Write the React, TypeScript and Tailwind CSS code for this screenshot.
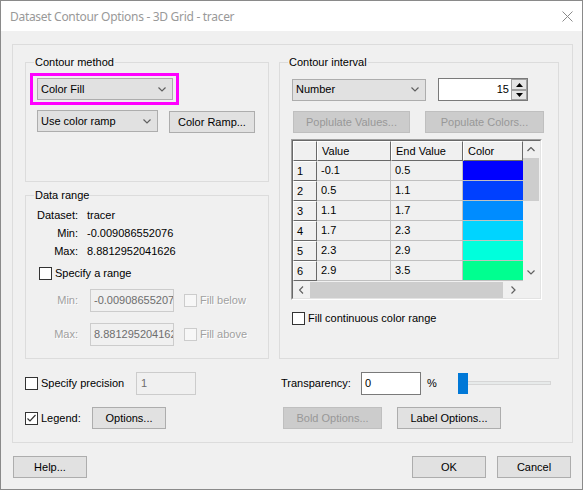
import React from "react";
import clsx from "clsx";

const colors = ["#0000ff", "#0040ff", "#008cff", "#00d4ff", "#00ffdc", "#00ff90"];

const rows = [
    ["-0.1", "0.5"],
    ["0.5", "1.1"],
    ["1.1", "1.7"],
    ["1.7", "2.3"],
    ["2.3", "2.9"],
    ["2.9", "3.5"],
];

function Chevron({dir = "down"}: {dir?: "down" | "up" | "left" | "right"}) {
    const pts = {
        down: "0.5,0.5 4,4 7.5,0.5",
        up: "0.5,4 4,0.5 7.5,4",
        left: "4,0.5 0.5,4 4,7.5",
        right: "0.5,0.5 4,4 0.5,7.5",
    }[dir];
    const vertical = dir === "down" || dir === "up";
    return (
        <svg width={vertical ? 8 : 5} height={vertical ? 5 : 8} viewBox={vertical ? "0 0 8 5" : "0 0 5 8"} className="shrink-0">
            <polyline points={pts} fill="none" stroke="#606060" strokeWidth={1.2}/>
        </svg>
    );
}

function Combo({label, w}: {label: string; w: string}) {
    return (
        <div className={clsx(w, "h-[22px] flex items-center justify-between pl-[3px] pr-[6px] bg-[#e1e1e1] border border-[#adadad]")}>
            <span>{label}</span>
            <Chevron/>
        </div>
    );
}

function Btn({label, w, disabled}: {label: string; w: string; disabled?: boolean}) {
    return (
        <button
            className={clsx(
                w,
                "h-[22px] flex items-center justify-center border",
                disabled ? "bg-[#cccccc] border-[#bfbfbf] text-[#989898]" : "bg-[#e1e1e1] border-[#adadad]"
            )}
        >
            {label}
        </button>
    );
}

function Check({checked, disabled}: {checked?: boolean; disabled?: boolean}) {
    return (
        <span
            className={clsx(
                "w-[13px] h-[13px] shrink-0 border flex items-center justify-center",
                disabled ? "border-[#cccccc] bg-[#f7f7f7]" : "border-[#333333] bg-white"
            )}
        >
            {checked && (
                <svg width="11" height="11" viewBox="0 0 11 11">
                    <polyline points="1.5,5.5 4,8 9.5,2" fill="none" stroke="#333333" strokeWidth="1.2"/>
                </svg>
            )}
        </span>
    );
}

function Group({label, className, children}: {label: string; className: string; children?: React.ReactNode}) {
    return (
        <div className={clsx("relative border border-[#dcdcdc]", className)}>
            <span className="absolute -top-[7px] left-[8px] px-[1px] bg-[#f0f0f0]">{label}</span>
            {children}
        </div>
    );
}

const headCell = "h-[20px] flex items-center bg-[#f0f0f0] border-t border-l border-t-white border-l-white border-r border-b border-r-[#696969] border-b-[#696969]";

function Table() {
    return (
        <div className="mt-[6px] ml-[11px] w-[251px] border border-t-[#a0a0a0] border-l-[#a0a0a0] border-b-white border-r-white">
            <div className="border border-t-[#696969] border-l-[#696969] border-b-[#e3e3e3] border-r-[#e3e3e3] bg-[#f0f0f0]">
                <div className="flex">
                    <div className="grid grid-cols-[24px_74px_72px_60px]">
                        <div className={headCell}></div>
                        <div className={clsx(headCell, "pl-[4px]")}>Value</div>
                        <div className={clsx(headCell, "pl-[4px]")}>End Value</div>
                        <div className={clsx(headCell, "pl-[4px]")}>Color</div>
                        {rows.map((r, i) => (
                            <React.Fragment key={i}>
                                <div className={clsx(headCell, "pl-[3px]")}>{i + 1}</div>
                                <div className="h-[20px] flex items-center pl-[4px] border-r border-b border-[#c0c0c0]">{r[0]}</div>
                                <div className="h-[20px] flex items-center pl-[4px] border-r border-b border-[#c0c0c0]">{r[1]}</div>
                                <div className="h-[20px] border-b border-[#c0c0c0]" style={{backgroundColor: colors[i]}}></div>
                            </React.Fragment>
                        ))}
                    </div>
                    <div className="w-[16px] h-[140px] flex flex-col items-center">
                        <div className="h-[17px] flex items-center justify-center"><Chevron dir="up"/></div>
                        <div className="w-[16px] h-[43px] bg-[#cdcdcd]"></div>
                        <div className="flex-1"></div>
                        <div className="h-[17px] flex items-center justify-center"><Chevron dir="down"/></div>
                    </div>
                </div>
                <div className="flex h-[17px]">
                    <div className="w-[230px] flex items-center">
                        <div className="w-[17px] flex justify-center"><Chevron dir="left"/></div>
                        <div className="w-[193px] h-[16px] bg-[#cdcdcd]"></div>
                        <div className="flex-1 flex justify-center"><Chevron dir="right"/></div>
                    </div>
                    <div className="flex-1"></div>
                </div>
            </div>
        </div>
    );
}

const off = "text-[#a0a0a0] [text-shadow:1px_1px_0_#ffffff]";

export default function App() {
    return (
        <div className="w-[583px] h-[490px] bg-[#f0f0f0] border border-[#8a8a8a] flex flex-col text-[11px] leading-[13px] text-black font-['Liberation_Sans',Arial,sans-serif]">
            <div className="h-[30px] shrink-0 bg-white flex items-center justify-between pl-[9px] pr-[9px]">
                <span className="text-[12px] text-[#999999] font-['Noto_Sans','Open_Sans',sans-serif] tracking-[-0.3px]">
                    Dataset Contour Options - 3D Grid - tracer
                </span>
                <svg width="11" height="11" viewBox="0 0 11 11">
                    <path d="M0.5 0.5 L10.5 10.5 M10.5 0.5 L0.5 10.5" stroke="#8a8a8a" strokeWidth="1"/>
                </svg>
            </div>

            <div className="mt-[13px] ml-[11px] w-[561px] h-[399px] shrink-0 border border-[#dcdcdc] pt-[17px] pl-[12px]">
                <div className="flex gap-[10px]">
                    <div className="w-[244px] flex flex-col gap-[13px]">
                        <Group label="Contour method" className="h-[120px]">
                            <div className="ml-[4px] mt-[10px] w-[149px] h-[32px] border-[3px] border-[#ff00ff] pl-[4px] pt-[2px]">
                                <Combo label="Color Fill" w="w-[136px]"/>
                            </div>
                            <div className="flex items-start mt-[5px] ml-[11px]">
                                <Combo label="Use color ramp" w="w-[121px]"/>
                                <div className="ml-[11px] mt-[1px]">
                                    <Btn label="Color Ramp..." w="w-[86px]"/>
                                </div>
                            </div>
                        </Group>

                        <Group label="Data range" className="h-[164px]">
                            <div className="mt-[10px] ml-[11px] flex flex-col">
                                <div className="flex h-[18px] items-center">
                                    <span className="w-[41px] text-right">Dataset:</span>
                                    <span className="ml-[9px]">tracer</span>
                                </div>
                                <div className="flex h-[18px] items-center">
                                    <span className="w-[41px] text-right">Min:</span>
                                    <span className="ml-[9px]">-0.009086552076</span>
                                </div>
                                <div className="flex h-[18px] items-center">
                                    <span className="w-[41px] text-right">Max:</span>
                                    <span className="ml-[9px]">8.8812952041626</span>
                                </div>
                                <div className="flex h-[18px] items-center mt-[4px] ml-[2px]">
                                    <Check/>
                                    <span className="ml-[3px]">Specify a range</span>
                                </div>
                                <div className="flex h-[23px] items-center mt-[7px]">
                                    <span className={clsx("w-[41px] text-right", off)}>Min:</span>
                                    <div className="ml-[12px] w-[84px] h-[23px] flex items-center pl-[3px] overflow-hidden whitespace-nowrap bg-[#f0f0f0] border border-[#cccccc] text-[#6d6d6d]">
                                        -0.009086552076
                                    </div>
                                    <span className="ml-[10px]"><Check disabled/></span>
                                    <span className={clsx("ml-[3px]", off)}>Fill below</span>
                                </div>
                                <div className="flex h-[23px] items-center mt-[11px]">
                                    <span className={clsx("w-[41px] text-right", off)}>Max:</span>
                                    <div className="ml-[12px] w-[84px] h-[23px] flex items-center pl-[3px] overflow-hidden whitespace-nowrap bg-[#f0f0f0] border border-[#cccccc] text-[#6d6d6d]">
                                        8.8812952041626
                                    </div>
                                    <span className="ml-[10px]"><Check disabled/></span>
                                    <span className={clsx("ml-[3px]", off)}>Fill above</span>
                                </div>
                            </div>
                        </Group>
                    </div>

                    <Group label="Contour interval" className="w-[280px] h-[297px]">
                        <div className="flex items-center mt-[15px] ml-[12px]">
                            <Combo label="Number" w="w-[134px]"/>
                            <div className="ml-[12px] w-[90px] h-[23px] flex bg-white border border-[#7a7a7a]">
                                <span className="flex-1 flex items-center justify-end pr-[2px]">15</span>
                                <div className="w-[16px] flex flex-col">
                                    <div className="h-[11px] flex items-center justify-center bg-[#e5e5e5] border border-[#a0a0a0]">
                                        <svg width="7" height="4" viewBox="0 0 7 4"><polygon points="0,4 3.5,0 7,4" fill="#000"/></svg>
                                    </div>
                                    <div className="h-[10px] flex items-center justify-center bg-[#e5e5e5] border border-[#a0a0a0]">
                                        <svg width="7" height="4" viewBox="0 0 7 4"><polygon points="0,0 3.5,4 7,0" fill="#000"/></svg>
                                    </div>
                                </div>
                            </div>
                        </div>
                        <div className="flex mt-[10px] ml-[13px] gap-[15px]">
                            <Btn label="Poplulate Values..." w="w-[117px]" disabled/>
                            <Btn label="Populate Colors..." w="w-[119px]" disabled/>
                        </div>
                        <Table/>
                        <div className="flex items-center mt-[11px] ml-[12px] h-[14px]">
                            <Check/>
                            <span className="ml-[3px]">Fill continuous color range</span>
                        </div>
                    </Group>
                </div>

                <div className="flex items-center mt-[12px] h-[24px]">
                    <div className="w-[244px] flex items-center">
                        <Check/>
                        <span className="ml-[3px] w-[95px]">Specify precision</span>
                        <div className="w-[60px] h-[23px] flex items-center pl-[4px] bg-[#f0f0f0] border border-[#cccccc] text-[#6d6d6d]">1</div>
                    </div>
                    <div className="ml-[10px] pl-[2px] flex items-center">
                        <span className="w-[80px]">Transparency:</span>
                        <div className="w-[60px] h-[23px] flex items-center pl-[3px] bg-white border border-[#7a7a7a]">0</div>
                        <span className="ml-[6px] w-[25px]">%</span>
                        <div className="relative ml-[6px] w-[93px] h-[21px] flex items-center">
                            <div className="w-full h-[4px] bg-[#e7eaea] border border-[#d6d6d6]"></div>
                            <div className="absolute left-0 top-0 w-[10px] h-[21px] bg-[#0078d7]"></div>
                        </div>
                    </div>
                </div>

                <div className="flex items-center mt-[12px] h-[22px]">
                    <div className="w-[244px] flex items-center">
                        <Check checked/>
                        <span className="ml-[3px] w-[51px]">Legend:</span>
                        <Btn label="Options..." w="w-[74px]"/>
                    </div>
                    <div className="ml-[10px] pl-[4px] flex items-center gap-[15px]">
                        <Btn label="Bold Options..." w="w-[99px]" disabled/>
                        <Btn label="Label Options..." w="w-[104px]"/>
                    </div>
                </div>
            </div>

            <div className="flex justify-between mt-[13px] pl-[12px] pr-[11px]">
                <Btn label="Help..." w="w-[74px]"/>
                <div className="flex gap-[11px]">
                    <Btn label="OK" w="w-[74px]"/>
                    <Btn label="Cancel" w="w-[74px]"/>
                </div>
            </div>
        </div>
    );
}
